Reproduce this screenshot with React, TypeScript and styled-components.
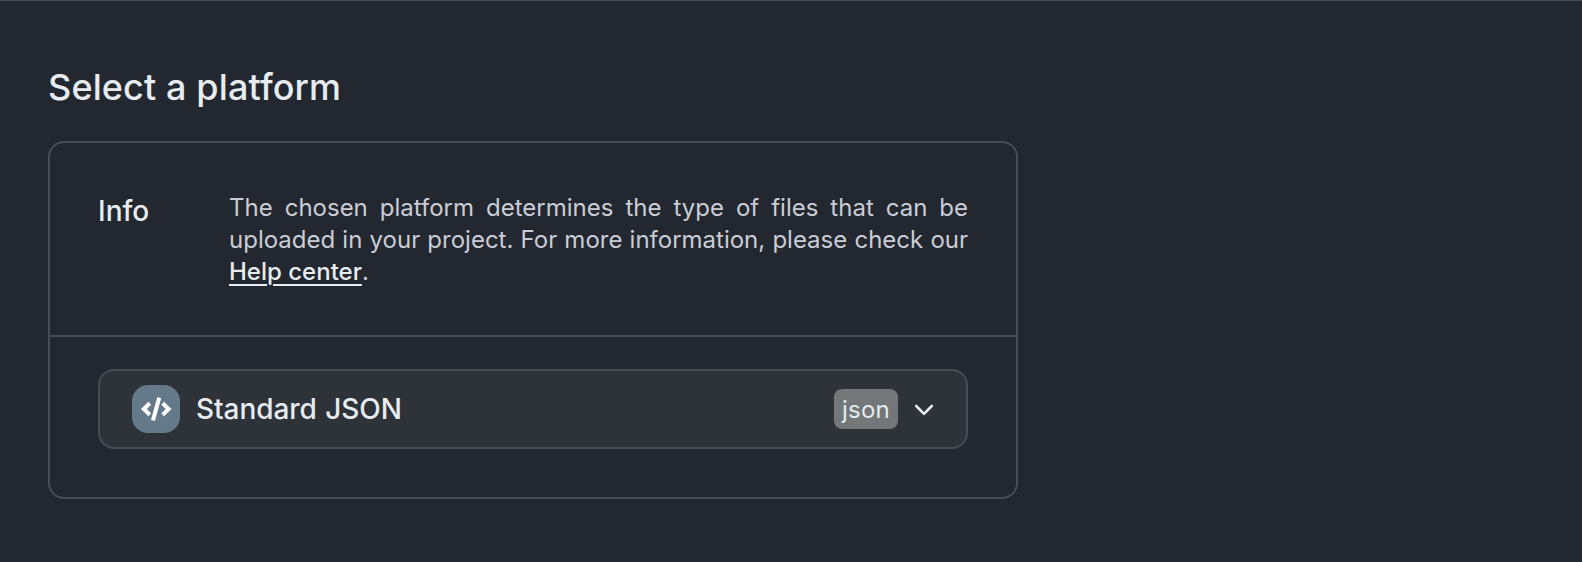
import React from 'react';
import styled, { createGlobalStyle } from 'styled-components';

const GlobalStyle = createGlobalStyle`
  *, *::before, *::after { box-sizing: border-box; }
  body { margin: 0; background: #23272f; font-family: Inter, sans-serif; -webkit-font-smoothing: antialiased; }
`;

const Page = styled.main`
  height: 562px;
  padding: 62px 48px 0;
  border-top: 1px solid #474c53;
  color: #e6ecef;
`;

const Title = styled.h1`
  margin: 0;
  font-size: 36px;
  font-weight: 500;
  letter-spacing: 0.12px;
  line-height: 48px;
  font-feature-settings: 'calt' 0, 'liga' 0;
`;

const Card = styled.section`
  width: 970px;
  height: 358px;
  margin-top: 30px;
  border: 2px solid #484c55;
  border-radius: 16px;
`;

const InfoRow = styled.div`
  display: flex;
  height: 194px;
  padding: 49px 48px 0;
  border-bottom: 2px solid #484c55;
`;

const InfoLabel = styled.h2`
  width: 131px;
  margin: 0;
  flex: none;
  font-size: 28px;
  font-weight: 500;
  line-height: 38px;
`;

const InfoText = styled.p`
  flex: 1;
  margin: 0;
  color: #cacdd7;
  font-size: 24px;
  line-height: 32px;
  text-align: justify;
  font-variant-ligatures: none;
`;

const HelpLink = styled.a`
  color: #e6ecef;
  font-weight: 500;
  text-decoration: underline;
  text-decoration-thickness: 2px;
  text-underline-offset: 4px;
`;

const SelectRow = styled.div`
  padding: 32px 48px;
`;

const Select = styled.button`
  display: flex;
  align-items: center;
  width: 100%;
  height: 80px;
  padding: 0 32px;
  border: 2px solid #484c55;
  border-radius: 16px;
  background: #2e3239;
  color: #e6ecef;
  font: 500 28px/40px Inter, sans-serif;
`;

const PlatformIcon = styled.svg`
  width: 48px;
  height: 48px;
  margin-right: 16px;
`;

const PlatformName = styled.span`
  letter-spacing: -0.08px;
  word-spacing: 1.2px;
`;

const Tag = styled.span`
  width: 64px;
  height: 40px;
  margin-left: auto;
  border-radius: 8px;
  background: #757678;
  color: #e2ebef;
  font-size: 24px;
  line-height: 41px;
  font-weight: 400;
  letter-spacing: 0.2px;
  text-align: center;
`;

const Chevron = styled.svg`
  width: 20px;
  height: 12px;
  margin: 2px 0 0 16px;
`;

export default function App() {
  return (
    <Page>
      <GlobalStyle />
      <Title>Select a platform</Title>
      <Card>
        <InfoRow>
          <InfoLabel>Info</InfoLabel>
          <InfoText>
            The chosen platform determines the type of files that can be uploaded in your project. For more information, please check our <HelpLink>Help center</HelpLink>.
          </InfoText>
        </InfoRow>
        <SelectRow>
          <Select type="button">
            <PlatformIcon viewBox="0 0 48 48" fill="none">
              <rect width="48" height="48" rx="16" fill="#64798a" />
              <path d="M17.8 18.3L11.9 24l5.9 5.7M30.7 18.3l5.9 5.7-5.9 5.7" stroke="#fff" strokeWidth="4" />
              <path d="M27.3 12.6L20.9 35.5" stroke="#fff" strokeWidth="4" />
            </PlatformIcon>
            <PlatformName>Standard JSON</PlatformName>
            <Tag>json</Tag>
            <Chevron viewBox="0 0 20 12" fill="none">
              <path d="M2.2 2l7.8 7.8L17.8 2" stroke="#e6ecef" strokeWidth="2.6" strokeLinecap="round" strokeLinejoin="round" />
            </Chevron>
          </Select>
        </SelectRow>
      </Card>
    </Page>
  );
}
